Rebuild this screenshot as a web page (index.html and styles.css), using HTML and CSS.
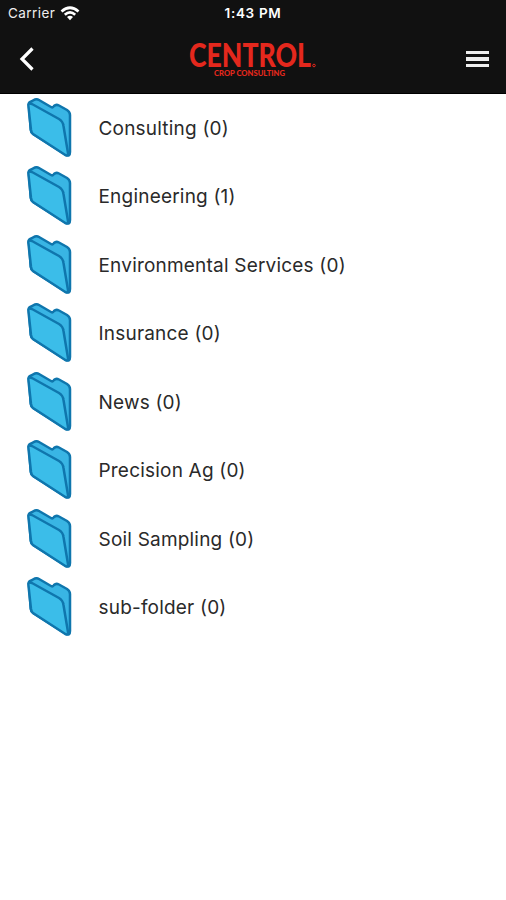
FILE: index.html
```html
<!DOCTYPE html>
<html lang="en">
<head>
<meta charset="utf-8">
<title>Folders</title>
<link rel="stylesheet" href="styles.css">
</head>
<body>
<svg class="defs" width="0" height="0" aria-hidden="true">
  <symbol id="folder" viewBox="0 0 48 60">
    <path d="M3 8Q2 4.500 5 3.500L9 1.500Q11 .8 13 2L25 9Q27 10 28 8Q30 6 33 7.500L41 12Q44 14 44 17V54Q44 59 40 57L7 36Q5 35 4.700 32Z" fill="#39b5e4" stroke="#0f76ad" stroke-width="2.500"/>
    <path d="M2.500 9Q1.500 4 6 6L33 21Q37 23.500 37.500 28L42 55Q42 59 38.500 56.500L7 36Q5.500 35 5 32Z" fill="#3bbde9" stroke="#0f76ad" stroke-width="2.500"/>
  </symbol>
</svg>
<header class="header">
  <div class="status">
    <div class="carrier"><span>Carrier</span>
      <svg class="wifi" viewBox="0 0 20 15"><path d="M1.500 5.500Q10-2 18.500 5.500M4.800 8.700Q10 4 15.200 8.700" fill="none" stroke="#fff" stroke-width="2.700"/><path d="M7 11Q10 8.300 13 11L10 14.200Z" fill="#fff"/></svg>
    </div>
    <div class="time">1:43 PM</div>
    <div></div>
  </div>
  <nav class="bar">
    <svg class="back" viewBox="0 0 16 26"><path d="M13.500 2.500L3 13L13.500 23.500" fill="none" stroke="#fff" stroke-width="3.200"/></svg>
    <svg class="logo" viewBox="0 0 130 36">
      <text class="brand" x="0" y="26" textLength="122" lengthAdjust="spacingAndGlyphs">CENTROL</text>
      <text class="tagline" x="25" y="34.500" textLength="71" lengthAdjust="spacingAndGlyphs">CROP CONSULTING</text>
      <circle cx="125" cy="24.500" r="1.300" fill="none" stroke="#e4281d"/>
    </svg>
    <div class="menu"><i></i><i></i><i></i></div>
  </nav>
</header>
<main class="list">
  <div class="row"><svg class="icon"><use href="#folder"/></svg><span>Consulting (0)</span></div>
  <div class="row"><svg class="icon"><use href="#folder"/></svg><span>Engineering (1)</span></div>
  <div class="row"><svg class="icon"><use href="#folder"/></svg><span>Environmental Services (0)</span></div>
  <div class="row"><svg class="icon"><use href="#folder"/></svg><span>Insurance (0)</span></div>
  <div class="row"><svg class="icon"><use href="#folder"/></svg><span>News (0)</span></div>
  <div class="row"><svg class="icon"><use href="#folder"/></svg><span>Precision Ag (0)</span></div>
  <div class="row"><svg class="icon"><use href="#folder"/></svg><span>Soil Sampling (0)</span></div>
  <div class="row"><svg class="icon"><use href="#folder"/></svg><span>sub-folder (0)</span></div>
</main>
</body>
</html>
```
FILE: styles.css
```css
* { box-sizing: border-box; }
body { margin: 0; background: #fff; color: #2a2a2a; font-family: Inter, "Liberation Sans", sans-serif; }
svg { display: block; flex: none; }
.defs { height: 0; }
.header { height: 93.5px; background: #111; border-bottom: 1px solid #000; color: #fff; }
.status { height: 26px; padding: 0 8px; display: grid; grid-template-columns: 1fr auto 1fr; align-items: center; font-size: 13.5px; }
.carrier { display: flex; align-items: center; gap: 5px; color: #eee; letter-spacing: .45px; }
.wifi { width: 20px; height: 15px; }
.time { font-size: 13.5px; font-weight: 600; letter-spacing: .7px; }
.bar { height: 66px; padding: 0 17px 0 19px; display: flex; align-items: center; justify-content: space-between; }
.back { width: 16px; height: 26px; }
.logo { width: 130px; height: 36px; margin-left: 7px; overflow: visible; }
.brand { font-family: Lato, sans-serif; font-size: 33px; font-weight: 900; fill: #e4281d; }
.tagline { font-family: Lato, sans-serif; font-size: 7.5px; font-weight: 900; fill: #e4281d; }
.menu { width: 23px; display: grid; gap: 3px; }
.menu i { height: 3.3px; background: #eee; }
.row { height: 68.5px; padding: 0 0 0 26px; display: flex; align-items: center; gap: 24.5px; font-size: 19px; letter-spacing: .2px; }
.row span { padding-top: 1px; }
.icon { width: 48px; height: 60px; }
```
